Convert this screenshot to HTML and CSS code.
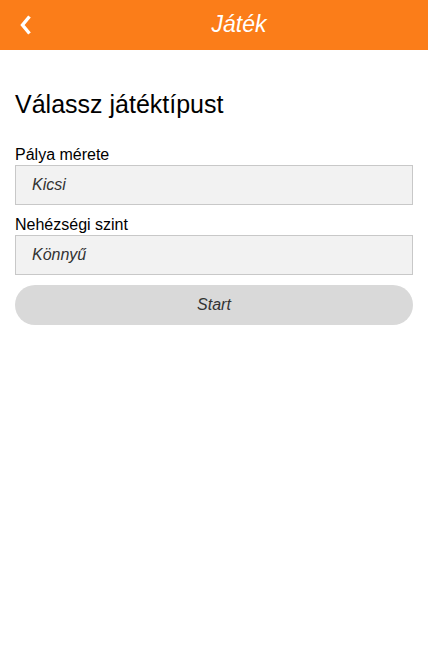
FILE: index.html
```html
<!DOCTYPE html>
<html lang="hu">
<head>
<meta charset="utf-8">
<title>Játék</title>
<link rel="stylesheet" href="styles.css">
</head>
<body>
<header class="topbar">
  <button class="back" aria-label="Vissza">
    <svg width="14" height="22" viewBox="0 0 14 22"><path d="M10.5 2.5 L3.5 11 L10.5 19.5" fill="none" stroke="#fff" stroke-width="3.4" stroke-linecap="butt" stroke-linejoin="miter"/></svg>
  </button>
  <h2 class="title">Játék</h2>
</header>
<main class="content">
  <h1 class="heading">Válassz játéktípust</h1>
  <div class="field">
    <div class="label">Pálya mérete</div>
    <div class="select">Kicsi</div>
  </div>
  <div class="field">
    <div class="label">Nehézségi szint</div>
    <div class="select">Könnyű</div>
  </div>
  <button class="start">Start</button>
</main>
</body>
</html>
```
FILE: styles.css
```css
html, body {
  margin: 0;
  padding: 0;
  background: #fff;
  font-family: "Liberation Sans", Arial, sans-serif;
}
.topbar {
  height: 50px;
  background: #fb7d19;
  display: flex;
  align-items: center;
}
.back {
  width: 50px;
  height: 50px;
  border: 0;
  background: transparent;
  padding: 0 0 0 19px;
  display: flex;
  align-items: center;
  cursor: pointer;
}
.title {
  flex: 1;
  margin: 0;
  text-align: center;
  color: #fff;
  font-weight: normal;
  font-style: italic;
  font-size: 23px;
  padding-bottom: 2px;
}
.content {
  padding: 0 15px;
}
.heading {
  margin: 40px 0 26px;
  font-size: 25px;
  font-weight: normal;
  color: #000;
}
.field {
  margin-bottom: 10px;
}
.label {
  font-size: 16px;
  line-height: 20px;
  color: #000;
}
.select {
  height: 38px;
  border: 1px solid #c8c8c8;
  background: #f2f2f2;
  padding-left: 16px;
  display: flex;
  align-items: center;
  font-size: 16px;
  font-style: italic;
  color: #333;
}
.start {
  display: block;
  width: 100%;
  height: 40px;
  border: 0;
  border-radius: 20px;
  background: #d9d9d9;
  font-family: "Liberation Sans", Arial, sans-serif;
  font-size: 16px;
  font-style: italic;
  color: #333;
}
```
